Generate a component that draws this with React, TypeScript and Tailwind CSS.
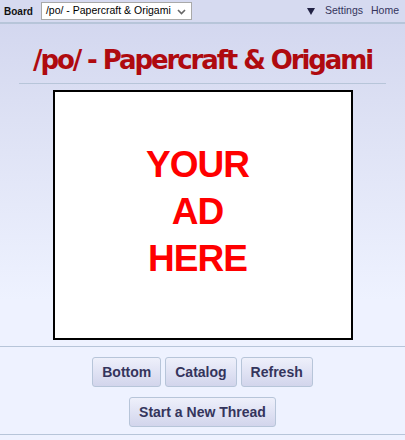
import React from "react";

function Button({ children }: { children: React.ReactNode }) {
  return (
    <span className="inline-block rounded-[3px] border border-[#b7c5d9] bg-[linear-gradient(to_bottom,#eef0fb_0%,#d2d5ec_100%)] px-[9px] py-[6px] text-[14px] font-bold leading-[16px] text-[#34345c] [font-family:'Liberation_Sans',Arial,sans-serif]">
      {children}
    </span>
  );
}

export default function App() {
  return (
    <div className="min-h-[440px] w-[405px] bg-[linear-gradient(to_bottom,#d1d5ee_0px,#dde1f4_120px,#eef2ff_300px,#eef2ff_100%)] [font-family:'Liberation_Sans',Arial,sans-serif]">
      {/* top nav */}
      <div className="flex h-[24px] items-center border-b-2 border-[#b7c5d9] bg-[#d6daf0] pl-[4px] pr-[6px]">
        <span className="text-[10px] font-bold text-[#111]">Board</span>
        <div className="ml-[8px] flex h-[18px] w-[151px] items-center justify-between border border-[#a9a9a9] bg-white pl-[4px] pr-[5px]">
          <span className="text-[10.5px] text-black">/po/ - Papercraft &amp; Origami</span>
          <svg width="9" height="6" viewBox="0 0 9 6" className="mt-[1px]">
            <path d="M1 1 L4.5 4.5 L8 1" fill="none" stroke="#666" strokeWidth="1.6" />
          </svg>
        </div>
        <div className="ml-auto flex items-center text-[10.5px] text-[#34345c]">
          <svg width="8" height="7" viewBox="0 0 8 7" className="mr-[10px]">
            <path d="M0 0 L8 0 L4 7 Z" fill="#222244" />
          </svg>
          <span className="mr-[8px]">Settings</span>
          <span>Home</span>
        </div>
      </div>

      {/* title */}
      <div className="pt-[21px] text-center text-[26px] font-bold leading-[30px] tracking-[-2.1px] text-[#af0a0f] [font-family:'DejaVu_Sans',Tahoma,sans-serif]">
        /po/ - Papercraft &amp; Origami
      </div>
      <div className="mx-[19px] mt-[8px] h-px bg-[#b7c5d9]" />

      {/* ad */}
      <div className="mt-[6px] flex justify-center">
        <div className="flex h-[250px] w-[300px] flex-col items-center justify-center border-2 border-black bg-white pb-[8px] pr-[10px] text-center text-[37px] font-bold leading-[47px] tracking-[-1px] text-[#ff0000]">
          <span>YOUR</span>
          <span>AD</span>
          <span>HERE</span>
        </div>
      </div>

      <div className="mt-[6px] h-px bg-[#b7c5d9]" />

      {/* buttons */}
      <div className="mt-[10px] flex justify-center gap-[4px]">
        <Button>Bottom</Button>
        <Button>Catalog</Button>
        <Button>Refresh</Button>
      </div>
      <div className="mt-[10px] flex justify-center">
        <Button>Start a New Thread</Button>
      </div>
      <div className="mt-[7px] h-px bg-[#b7c5d9]" />
    </div>
  );
}
